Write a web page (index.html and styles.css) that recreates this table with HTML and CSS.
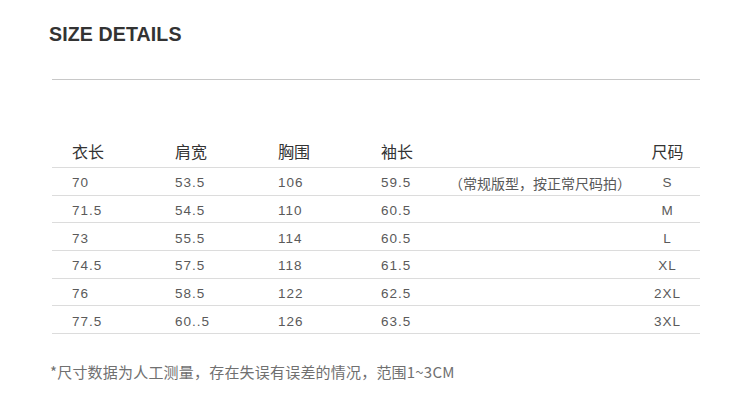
FILE: index.html
```html
<!DOCTYPE html>
<html lang="zh">
<head>
<meta charset="utf-8">
<link rel="stylesheet" href="styles.css">
</head>
<body>
<div class="page">
  <h1 class="title">SIZE DETAILS</h1>
  <div class="rule"></div>
  <table class="size-table">
    <colgroup>
      <col class="c-pad"><col class="c-num"><col class="c-num"><col class="c-num"><col class="c-sleeve"><col class="c-note"><col class="c-size">
    </colgroup>
    <thead>
      <tr><th></th><th>衣长</th><th>肩宽</th><th>胸围</th><th>袖长</th><th></th><th class="center">尺码</th></tr>
    </thead>
    <tbody>
      <tr><td></td><td>70</td><td>53.5</td><td>106</td><td>59.5</td><td class="note">（常规版型，按正常尺码拍）</td><td class="center">S</td></tr>
      <tr><td></td><td>71.5</td><td>54.5</td><td>110</td><td>60.5</td><td></td><td class="center">M</td></tr>
      <tr><td></td><td>73</td><td>55.5</td><td>114</td><td>60.5</td><td></td><td class="center">L</td></tr>
      <tr><td></td><td>74.5</td><td>57.5</td><td>118</td><td>61.5</td><td></td><td class="center">XL</td></tr>
      <tr><td></td><td>76</td><td>58.5</td><td>122</td><td>62.5</td><td></td><td class="center">2XL</td></tr>
      <tr><td></td><td>77.5</td><td>60..5</td><td>126</td><td>63.5</td><td></td><td class="center">3XL</td></tr>
    </tbody>
  </table>
  <p class="footnote">*尺寸数据为人工测量，存在失误有误差的情况，范围1~3CM</p>
</div>
</body>
</html>
```

FILE: styles.css
```css
html, body {
  margin: 0;
  padding: 0;
  background: #ffffff;
}
body {
  font-family: "Liberation Sans", "Noto Sans CJK SC", sans-serif;
  color: #333;
}
.page {
  width: 648px;
  padding: 22px 0 0 52px;
}
.title {
  margin: 0 0 33px -3px;
  font-family: "Liberation Sans", Arial, sans-serif;
  font-size: 19.6px;
  line-height: 24px;
  font-weight: bold;
  color: #333;
  letter-spacing: 0.1px;
}
.rule {
  height: 1px;
  background: #c8c8c8;
}
.size-table {
  margin-top: 55px;
  width: 648px;
  border-collapse: collapse;
  table-layout: fixed;
}
.c-pad { width: 20px; }
.c-num { width: 103px; }
.c-sleeve { width: 68px; }
.c-note { width: 185px; }
.c-size { width: 66px; }
.size-table th {
  height: 32px;
  padding: 0;
  text-align: left;
  font-family: "Noto Sans CJK SC", sans-serif;
  font-weight: normal;
  font-size: 16px;
  color: #333;
  border-bottom: 1px solid #dcdcdc;
  vertical-align: middle;
}
.size-table td {
  height: 22.7px;
  padding: 4px 0 0 0;
  font-family: "Liberation Sans", "Noto Sans CJK SC", sans-serif;
  font-size: 13.5px;
  line-height: 16px;
  letter-spacing: 1px;
  color: #5a5a5a;
  border-bottom: 1px solid #dcdcdc;
  vertical-align: middle;
  white-space: nowrap;
}
.size-table .center {
  text-align: center;
  padding-left: 1px;
}
.size-table td.note {
  font-family: "Noto Sans CJK SC", sans-serif;
  font-size: 14px;
  letter-spacing: 0;
  color: #595959;
  padding-left: 0;
}
.footnote {
  margin: 28px 0 0 -2px;
  font-family: "Noto Sans CJK SC", sans-serif;
  font-size: 15px;
  line-height: 20px;
  letter-spacing: 0.2px;
  color: #707070;
  white-space: nowrap;
}
```
